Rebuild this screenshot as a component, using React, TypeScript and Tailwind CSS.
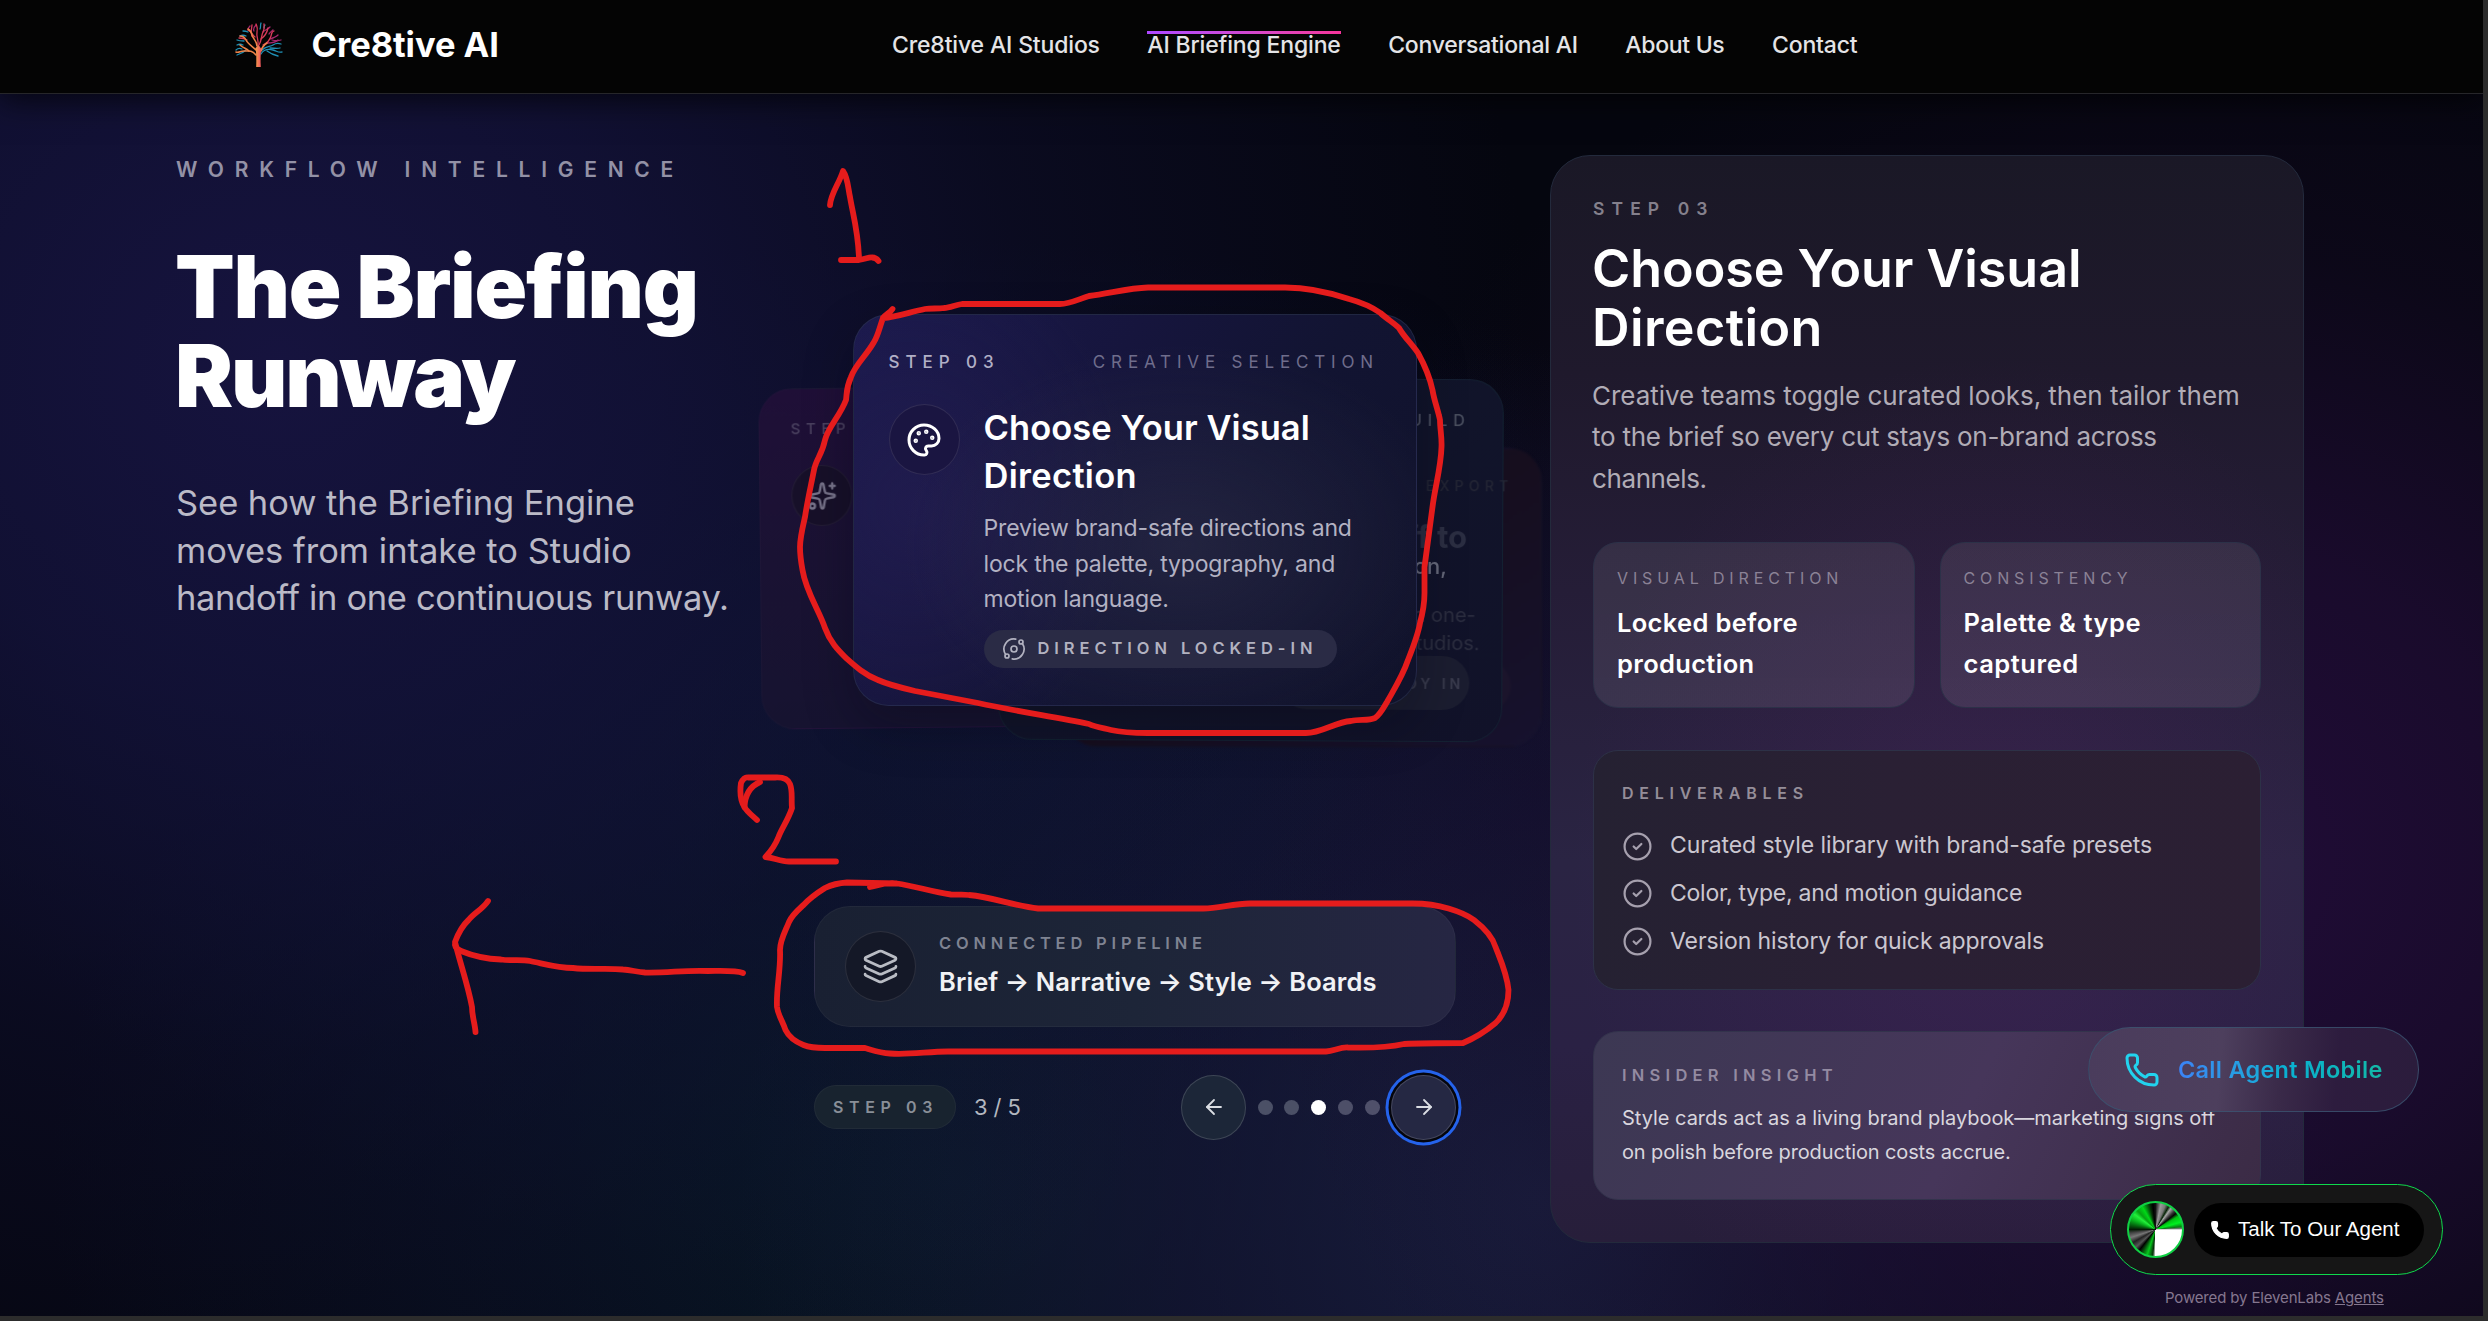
import type { ReactNode } from "react";
import {
  ArrowLeft,
  ArrowRight,
  CircleCheck,
  Layers,
  Orbit,
  Palette,
  Phone,
  Sparkles,
} from "lucide-react";

function TreeLogo() {
  return (
    <svg viewBox="0 0 50 46" className="h-[46px] w-[50px]" fill="none" strokeLinecap="round">
      <defs>
        <linearGradient id="trunk" x1="0" y1="0" x2="1" y2="0">
          <stop offset="0" stopColor="#f59e4b" />
          <stop offset="1" stopColor="#ef4f5f" />
        </linearGradient>
      </defs>
      <g stroke="#1f8fb4" strokeWidth="1.3">
        <path d="M27 32c3-5 8-5 12-4s5 3 9 2" />
        <path d="M28 28c4-4 8-3 11-5s5-2 8-1" />
        <path d="M33 29c4 3 7 4 11 5" />
        <path d="M36 26c4 0 7 1 10 0" />
        <path d="M12 28c-3 3-6 4-9 5" />
        <path d="M10 19c-2 0-5 0-7-1" />
        <path d="M8 27c-2-1-4-1-6 1" />
        <path d="M9 23c-2-1-4-1-6 0" />
        <path d="M14 10c-2-1-3-1-5-1M12 14c-2-1-4-1-6 0" />
        <path d="M26 7c1-2 0-3 1-6M30 6c0-1 0-2 1-3" />
      </g>
      <g stroke="#a5276f" strokeWidth="1.3">
        <path d="M36 17c3-1 6-2 8-4" />
        <path d="M29 10c2-2 5-3 7-5" />
        <path d="M33 21c4 0 8 0 11-3" />
        <path d="M35 12c1-2 3-3 4-4M38 18c3 1 6 1 9 0" />
        <path d="M20 9c-1-2 0-4 2-6M14 8c0-2 1-3 2-4" />
      </g>
      <g stroke="#d83b58" strokeWidth="1.3">
        <path d="M24 24c1-6-2-9-1-14s0-5-1-8" />
        <path d="M25 23c3-5 2-9 4-13s1-6 1-8" />
        <path d="M18 14c-1-4-1-7 0-11" />
        <path d="M27 17c4-3 6-6 7-11" />
        <path d="M29 23c4-2 7-5 8-9s1-4 3-5" />
        <path d="M13 18c-3-2-5-2-8-2M21 15c-3-2-3-5-7-7" />
      </g>
      <g stroke="#ee8349" strokeWidth="1.6">
        <path d="M22 33c-4-5-8-4-12-4s-5 2-8 1" />
        <path d="M22 28c-4-4-8-6-10-10s-4-4-6-4" />
        <path d="M15 29c-3-3-6-3-9-6" />
        <path d="M23 24c0-5-4-7-5-11s-2-5-4-6" />
        <path d="M27 29c1-4 3-6 6-8" />
      </g>
      <path d="M22.200 45c.3-7 .2-14-.7-19l3.200-3 2.600 4c-1 6-.8 12-.5 18z" fill="url(#trunk)" />
    </svg>
  );
}

function Header() {
  return (
    <header className="relative z-10 flex h-[94px] items-center border-b border-[#26262a] bg-[#040404] pb-[3px] shadow-[0_6px_30px_rgba(0,0,0,0.7)]">
      <div className="flex w-[892px] items-center pl-[234px]">
        <TreeLogo />
        <span className="ml-[27.5px] text-[34.5px] leading-[40px] font-bold tracking-[-0.05px] text-white">
          Cre8tive AI
        </span>
      </div>
      <nav className="flex items-center gap-[47.5px] text-[23px] leading-[32px] font-medium tracking-[-0.16px] text-[#e4e4e7]">
        <a>Cre8tive AI Studios</a>
        <a className="relative">
          <span className="absolute inset-x-0 top-[2px] h-[3px] bg-linear-to-r from-purple-500 to-pink-500" />
          AI Briefing Engine
        </a>
        <a className="tracking-[-0.25px]">Conversational AI</a>
        <a className="tracking-[-0.3px]">About Us</a>
        <a>Contact</a>
      </nav>
    </header>
  );
}

function Intro() {
  return (
    <div className="w-[638px] shrink-0 whitespace-nowrap">
      <p className="text-[21px] leading-[30px] font-semibold tracking-[10.75px] text-[#9391a6]">
        WORKFLOW INTELLIGENCE
      </p>
      <h1 className="mt-[56.5px] text-[87px] leading-[89px] font-black text-white">
        <span className="ml-[-1px] block tracking-[-1.2px]">The Briefing</span>
        <span className="ml-[-1px] block tracking-[-2.2px]">Runway</span>
      </h1>
      <p className="mt-[59.5px] text-[34.5px] leading-[47.6px] text-[#bbbac7]">
        <span className="block tracking-[-0.05px]">See how the Briefing Engine</span>
        <span className="block tracking-[0px]">moves from intake to Studio</span>
        <span className="block tracking-[-0.35px]">handoff in one continuous runway.</span>
      </p>
    </div>
  );
}

function SideCards() {
  return (
    <>
      <div className="absolute top-[231px] left-[-54px] h-[341px] w-[500px] rotate-[-0.6deg] rounded-[34px] border border-white/[0.02] bg-linear-to-b from-[#1f0f37] via-[#1a1233] to-[#161330] blur-[0.6px]">
        <div className="px-[31px] pt-[30px]">
          <p className="text-[15px] leading-[20px] font-medium tracking-[5.6px] text-[#4b4260]">STEP</p>
          <div className="mt-[26px] flex size-[61px] items-center justify-center rounded-full border border-white/[0.05] bg-[#171029]">
            <Sparkles className="size-[30px] text-[#77738a]" strokeWidth={1.9} />
          </div>
        </div>
      </div>

      <div className="absolute top-[293px] left-[250px] flex h-[299px] w-[478px] flex-col items-end justify-end rounded-[34px] border border-white/[0.015] bg-linear-to-br from-[#0f1024] via-[#160e1e] to-[#16122e] pr-[30px] pb-[35px] blur-[0.8px]">
        <div className="h-[50px] w-[120px] rounded-full bg-[#1b142b]" />
      </div>

      <div className="absolute top-[223px] left-[185px] flex h-[363px] w-[504px] rotate-[0.3deg] flex-col items-end rounded-[34px] border border-[#1c3a44]/35 bg-linear-to-br from-[#0c1426] via-[#11142a] to-[#111229] whitespace-nowrap blur-[0.6px]">
        <p className="mt-[29px] mr-[32px] text-[16px] leading-[22px] font-medium tracking-[6px] text-[#4b5060]">BUILD</p>
        <p className="mt-[45px] mr-[-11px] text-[14px] leading-[20px] font-medium tracking-[5.2px] text-[#242635]">EXPORT</p>
        <p className="mt-[22px] mr-[35px] text-[31px] leading-[38px] font-bold text-[#2b2e42]">Handoff to</p>
        <p className="mt-[-4px] mr-[55px] text-[22px] leading-[28px] font-medium text-[#66697a]">production,</p>
        <p className="mt-[21px] mr-[26px] text-[20px] leading-[28px] text-[#2c2e40]">Export and one-</p>
        <p className="mr-[22px] text-[20px] leading-[28px] text-[#2c2e40]">click to Studios.</p>
        <div className="mt-[-1px] mr-[32px] flex h-[54px] w-[190px] items-center justify-end rounded-full bg-[#1b1d30] pr-[5px] text-[14px] font-semibold tracking-[4px] text-[#3a3c4e]">
          READY IN
        </div>
      </div>
    </>
  );
}

function ActiveCard() {
  return (
    <div className="absolute top-[159px] left-[38.500px] h-[392px] w-[564.500px] rounded-[36px] border border-[#2c3350]/60 bg-[radial-gradient(ellipse_280px_200px_at_330px_230px,rgba(50,50,76,0.5),transparent_100%),radial-gradient(ellipse_220px_260px_at_60px_190px,rgba(40,32,88,0.5),transparent_100%),linear-gradient(125deg,#1a194c_0%,#16153d_35%,#121432_60%,#10122a_100%)] px-[35px] pt-[35px] shadow-[0_20px_50px_rgba(5,6,18,0.3)]">
      <div className="flex justify-between text-[17px] leading-[24px]">
        <span className="font-medium tracking-[5.95px] text-[#b1afc6]">STEP 03</span>
        <span className="mr-[2px] tracking-[5.85px] text-[#6f6d8c]">CREATIVE SELECTION</span>
      </div>
      <div className="mt-[30px] flex gap-[24px] whitespace-nowrap">
        <div className="flex size-[71px] shrink-0 items-center justify-center rounded-full border border-white/10 bg-[#1a1541]">
          <Palette className="size-[36px] text-white" strokeWidth={2} />
        </div>
        <div>
          <h2 className="text-[34.5px] leading-[47.5px] font-semibold tracking-[0.05px] text-white">
            Choose Your Visual
            <br />
            <span className="tracking-[0.3px]">Direction</span>
          </h2>
          <p className="mt-[12px] text-[23px] leading-[35.6px] tracking-[-0.16px] text-[#b3b2c3]">
            Preview brand-safe directions and
            <br />
            lock the palette, typography, and
            <br />
            motion language.
          </p>
          <div className="mt-[12px] flex h-[38px] w-[353px] items-center gap-[12px] rounded-full bg-[#2a2b45] pl-[18px] text-[16.5px] font-semibold tracking-[4.93px] text-[#b2b2c0]">
            <Orbit className="size-[24px]" strokeWidth={1.7} />
            DIRECTION LOCKED-IN
          </div>
        </div>
      </div>
    </div>
  );
}

function RoundIcon({ children }: { children: ReactNode }) {
  return (
    <div className="flex size-[71px] shrink-0 items-center justify-center rounded-full border border-white/10 bg-[#141827]">
      {children}
    </div>
  );
}

function Carousel() {
  return (
    <div className="w-[642px] shrink-0">
      <div className="relative h-[751px]">
        <SideCards />
        <ActiveCard />
      </div>

      <div className="flex h-[121px] items-center gap-[23px] rounded-[36px] border border-white/[0.04] bg-linear-to-r from-[#192032] via-[#1d2538] to-[#262643] px-[30px] whitespace-nowrap">
        <RoundIcon>
          <Layers className="size-[37px] text-[#b9bcc4]" strokeWidth={1.8} />
        </RoundIcon>
        <div className="mt-[-3px]">
          <p className="text-[16.5px] leading-[24px] font-semibold tracking-[4.81px] text-[#7f8392]">
            CONNECTED PIPELINE
          </p>
          <p className="mt-[9px] text-[25.5px] leading-[36px] font-semibold tracking-[0.1px] text-[#f1f2f5]">
            Brief → Narrative → Style → Boards
          </p>
        </div>
      </div>

      <div className="mt-[42px] flex h-[76px] items-center justify-between">
        <div className="flex items-center gap-[18px]">
          <span className="flex h-[44px] w-[142px] items-center rounded-full border border-white/[0.04] bg-[#18232f] pl-[18px] text-[16px] font-semibold tracking-[5.6px] text-[#898f98]">
            STEP 03
          </span>
          <span className="text-[22px] tracking-[-0.1px] text-[#b3b8c0]">3 / 5</span>
        </div>
        <div className="flex items-center gap-[11.5px]">
          <button className="flex size-[65px] items-center justify-center rounded-full border border-white/15 bg-[#1c2638] text-[#dadde3]">
            <ArrowLeft className="size-[24px]" strokeWidth={1.8} />
          </button>
          <div className="flex gap-[11.7px]">
            <span className="size-[15px] rounded-full bg-[#4b5066]" />
            <span className="size-[15px] rounded-full bg-[#4b5066]" />
            <span className="size-[15px] rounded-full bg-white" />
            <span className="size-[15px] rounded-full bg-[#4d4f68]" />
            <span className="size-[15px] rounded-full bg-[#4f506a]" />
          </div>
          <button className="flex size-[65px] items-center justify-center rounded-full border border-white/15 bg-[#252843] text-[#dadde3] shadow-[0_0_0_2.5px_#04050d,0_0_0_5.5px_#2563eb]">
            <ArrowRight className="size-[24px]" strokeWidth={1.8} />
          </button>
        </div>
      </div>
    </div>
  );
}

function Stat({ label, lines, track }: { label: string; lines: [string, string]; track: string }) {
  return (
    <div className="flex-1 rounded-[25px] border border-[#2c3148] bg-linear-to-b from-white/[0.08] to-white/[0.09] px-[23px] py-[23px]">
      <p className="text-[16px] leading-[24px] tracking-[4.88px] text-[#8b8296]">{label}</p>
      <p className={`mt-[12px] text-[25.5px] leading-[41.4px] font-semibold text-white ${track}`}>
        {lines[0]}
        <br />
        {lines[1]}
      </p>
    </div>
  );
}

function Deliverable({ children }: { children: ReactNode }) {
  return (
    <li className="flex items-center gap-[17px]">
      <CircleCheck className="size-[31px] text-[#a6a0ae]" strokeWidth={1.7} />
      {children}
    </li>
  );
}

function DetailPanel() {
  return (
    <aside className="h-[1088px] w-[754px] shrink-0 rounded-[40px] border border-[#232a3c] bg-[radial-gradient(ellipse_420px_520px_at_440px_720px,rgba(96,36,110,0.26),transparent_100%),linear-gradient(180deg,#1a1826_0%,#1f192c_20%,#251d37_40%,#2a2443_65%,#2a2144_82%,#271e3a_100%)] px-[42px] pt-[41px] whitespace-nowrap">
      <p className="text-[17.5px] leading-[24px] font-semibold tracking-[7.1px] text-[#84808c]">STEP 03</p>
      <h2 className="mt-[17.500px] ml-[-1px] text-[52px] leading-[59.4px] font-semibold tracking-[-0.05px] text-white">
        Choose Your Visual
        <br />
        <span className="tracking-[0.4px]">Direction</span>
      </h2>
      <p className="mt-[17.500px] ml-[-1px] text-[26px] leading-[41.4px] text-[#b1acb6]">
        <span className="block tracking-[-0.04px]">Creative teams toggle curated looks, then tailor them</span>
        <span className="block tracking-[-0.25px]">to the brief so every cut stays on-brand across</span>
        <span className="block tracking-[-0.4px]">channels.</span>
      </p>
      <div className="mt-[42.500px] flex gap-[25px]">
        <Stat label="VISUAL DIRECTION" lines={["Locked before", "production"]} track="tracking-[0.33px]" />
        <Stat label="CONSISTENCY" lines={["Palette & type", "captured"]} track="tracking-[0.55px]" />
      </div>
      <div className="mt-[41.500px] rounded-[25px] border border-[#2d3147] bg-[linear-gradient(90deg,#252132,#2a2034_45%,#2b1f33)] px-[28px] py-[30px]">
        <p className="text-[16px] leading-[24px] font-semibold tracking-[5.75px] text-[#958e99]">DELIVERABLES</p>
        <ul className="mt-[23.500px] flex flex-col gap-[12px] text-[23px] leading-[35.6px] tracking-[-0.1px] text-[#cbc7d0]">
          <Deliverable>Curated style library with brand-safe presets</Deliverable>
          <Deliverable>
            <span className="tracking-[-0.25px]">Color, type, and motion guidance</span>
          </Deliverable>
          <Deliverable>Version history for quick approvals</Deliverable>
        </ul>
      </div>
      <div className="mt-[41px] h-[169px] rounded-[25px] border border-[#33334c] bg-[linear-gradient(115deg,#3c3853,#46365a_55%,#3b2b45)] px-[28px] pt-[31px]">
        <p className="text-[16.5px] leading-[24px] font-semibold tracking-[5.25px] text-[#948ba2]">INSIDER INSIGHT</p>
        <p className="mt-[15px] text-[20px] leading-[33.4px] tracking-[-0.03px] text-[#d9d6de]">
          Style cards act as a living brand playbook—marketing signs off
          <br />
          <span className="tracking-[-0.12px]">on polish before production costs accrue.</span>
        </p>
      </div>
    </aside>
  );
}

function CallWidgets() {
  return (
    <div className="absolute right-[40px] bottom-0 z-20 flex h-[289px] w-[355px] flex-col whitespace-nowrap">
      <div className="flex h-[85px] w-[331px] items-center rounded-full border border-[#3a5470]/80 bg-[linear-gradient(95deg,#4a3c5c_0%,#4d3f5d_40%,#3a2a49_58%,#2d1c3e_75%,#2b1c3c_100%)] pl-[35px]">
        <Phone className="size-[36px] text-[#22d3ee]" strokeWidth={2} />
        <span className="ml-[18px] bg-linear-to-r from-[#3b82f6] via-[#0bb0d4] to-[#14b8a6] bg-clip-text text-[23.5px] leading-[34px] font-semibold tracking-[0.28px] text-transparent">
          Call Agent Mobile
        </span>
      </div>
      <div className="mt-[72px] ml-[22px] flex h-[91px] w-[333px] items-center rounded-[46px] border border-[#0fd94c] bg-[#161616] pl-[16px]">
        <div className="size-[57px] rounded-full border-2 border-[#10d044] bg-[conic-gradient(#111_0deg,#999_12deg,#777_22deg,#062406_30deg,#aaa_36deg,#333_46deg,#050505_52deg,#00c010_60deg,#00f020_74deg,#0a7a14_84deg,#777_88deg,#fff_91deg,#fff_180deg,#052e08_186deg,#06c81c_198deg,#063a0a_212deg,#000_218deg,#555_228deg,#222_240deg,#777_252deg,#444_262deg,#041a04_270deg,#04600e_280deg,#08b01c_292deg,#22f03a_306deg,#04a010_316deg,#00d818_330deg,#053408_346deg,#000_354deg,#111_360deg)]" />
        <div className="ml-[10px] flex h-[54px] w-[230px] items-center rounded-full bg-black pl-[16px] text-white">
          <Phone className="size-[20px] fill-current" strokeWidth={1.4} />
          <span className="ml-[8px] font-['Liberation_Sans',sans-serif] text-[20.5px]">Talk To Our Agent</span>
        </div>
      </div>
      <p className="mt-[11px] ml-[77px] text-[15px] leading-[24px] tracking-[-0.15px] text-[#85778f]">
        Powered by ElevenLabs <span className="underline">Agents</span>
      </p>
    </div>
  );
}

function Annotations() {
  return (
    <svg
      viewBox="0 0 2488 1321"
      className="pointer-events-none absolute top-0 left-0 z-30 h-[1321px] w-[2488px]"
      fill="none"
      stroke="#e51c1c"
      strokeWidth="5.8"
      strokeLinecap="round"
      strokeLinejoin="round"
    >
      <path d="M830 205C831 193 839 184 843 171C848 178 848 188 850 197C853 215 858 230 859 258" />
      <path d="M841 260H859C866 259 869 257 872 257.500C875 257.500 877 259 878.500 261" />
      <path d="M892.500 309C890 313 886 314 883 318C880 326 878 336 874 342C866 356 855 365 851 377C846 388 847 393 846 400C840 416 828 427 825 440C822 455 816 459 814 470C810 490 807 503 805 517C802 530 800 538 800 547C800 556 801 562 802.500 570C806 592 819 610 825 628C830 642 838 650 846 658C855 666 865 675 878 680C889 685 902 688 915 691L978 703C1015 711 1055 717 1089 724C1095 727 1103 728 1111 730C1124 733 1135 733 1148 733H1306C1322 733 1335 722 1351 721C1360 719 1368 721 1375 718C1380 715 1384 707 1387 702C1396 686 1403 675 1408 660C1414 645 1418 635 1420 623C1423 612 1424.500 603 1424.500 593V567C1427 547 1430 527 1432.500 507C1435 487 1441 467 1441.500 447C1442 437 1440 429 1440 420C1438 410 1434 400 1432.500 390C1430 378 1424 364 1418 353C1412 344 1404 337 1399 328C1394 323 1387 319 1380.500 313C1372 307 1360 302 1349 299C1328 292 1308 287.500 1285 287.500H1148C1128 288 1108 294 1089 296C1079 299 1070 304 1060 304H962C955 305 950 308 944 308C938 309 931 308 925 309C910 312 897 317 883 318" />
      <path d="M757 820C753 816 747 812 744.500 807C740 800 740 790 741 783C743 779 745 777 748 777.500H775C783 777 788 779 790 784C793 792 791 800 792 808C788 820 782 828 778.500 837C775 846 771 851 765.500 857C775 858 780 861.500 789 861.500H836" />
      <path d="M760 782C751 786 745 794 744.500 807" />
      <path d="M488 901C483 909 474 913 468.500 920C462 926 458 934 455 942C460 963 468 985 472 1007C472 1016 475 1024 475.500 1032" />
      <path d="M455 945C456 950 459 949 461 951C473 956 487 959 501 959.500C511 961 520 959 530 961C545 964 558 968 573 968C590 970 607 968 623 969.500C631 970 637 972 645 972.500C668 973 685 970 708 971C720 971 735 970 743 973" />
      <path d="M870 887C879 885 886 882 897 883.500L847 882.500C838 883 831 885 825 888C817 893 809 899 803.500 905C797 911 792 915 789 922C785 932 780 940 780 950C781 970 776 988 777 1007C778 1015 783 1022 785.500 1030C789 1037 796 1042 803.500 1045C811 1048 818 1048 825 1048H865C872 1050 880 1053 890 1053.500C909 1055 928 1051.500 948 1051.500H1326C1334 1051 1340 1047 1348 1047.500C1366 1048 1386 1048 1404 1044C1423 1043 1443 1043 1463 1043C1475 1038 1486 1031 1495.500 1023C1506 1013 1508.500 1000 1508.500 990C1507 974 1501 961 1495.500 947C1492 935 1483 927 1474 920C1466 914 1457 911 1448.500 908.500C1437 905 1425 903.500 1412.500 903.500H1250C1233 904 1219 908 1203.500 908.500H1038C1014 906 993 897 969 895C963 894 957 895 951 894.500C932 892 915 886 897 883.500" />
    </svg>
  );
}

export default function App() {
  return (
    <div className="relative h-[1321px] w-[2488px] overflow-hidden bg-[#2c2c2c] font-['Inter',sans-serif]">
      <div className="relative h-[1316px] w-[2483px] overflow-hidden bg-[#05060f] bg-[radial-gradient(ellipse_1250px_1150px_at_280px_360px,rgba(23,20,65,0.95)_0%,rgba(20,19,60,0.8)_30%,rgba(17,17,52,0.45)_60%,transparent_100%),radial-gradient(ellipse_950px_900px_at_2200px_860px,rgba(36,13,60,0.9)_0%,rgba(34,13,56,0.7)_35%,rgba(28,12,46,0.3)_68%,transparent_100%),radial-gradient(ellipse_800px_850px_at_1540px_1200px,rgba(26,31,64,0.9),rgba(24,22,58,0.6)_45%,transparent_100%),radial-gradient(ellipse_900px_700px_at_950px_1180px,rgba(8,30,42,0.8),rgba(9,22,40,0.5)_50%,transparent_100%),radial-gradient(ellipse_1000px_520px_at_950px_760px,rgba(14,22,54,0.8),transparent_100%)]">
        <Header />
        <main className="flex pt-[61px] pl-[176px]">
          <Intro />
          <Carousel />
          <div className="w-[94px] shrink-0" />
          <DetailPanel />
        </main>
        <CallWidgets />
      </div>
      <Annotations />
    </div>
  );
}
